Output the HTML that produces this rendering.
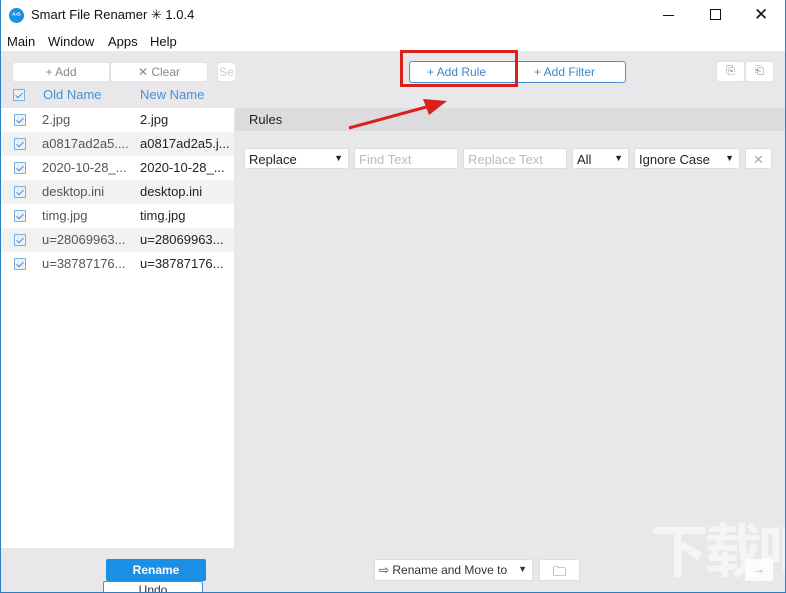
<!DOCTYPE html>
<html><head><meta charset="utf-8"><style>
*{box-sizing:border-box;margin:0;padding:0}
html,body{width:786px;height:593px;overflow:hidden}
body{font-family:"Liberation Sans",sans-serif;font-size:13px;background:#fff;position:relative;color:#333}
.abs{position:absolute}
.frame{left:0;top:0;width:786px;height:593px;border:1px solid #2d7fc1;border-top:none}
.btn{position:absolute;background:#fff;border:1px solid #e2e2e2;border-radius:3px;color:#888;text-align:center;font-size:12px}
.row{position:absolute;left:1px;width:233px;height:24px;font-size:13px}
.row span{position:absolute;top:4px;color:#555}
.cb{position:absolute;left:13px;top:6px;width:12px;height:12px;border:1px solid #7fb0dd;background:#e8f1fa}
.cb:after{content:"";position:absolute;left:3px;top:1px;width:3px;height:6px;border:solid #4a90d0;border-width:0 1.5px 1.5px 0;transform:rotate(45deg)}
.sel{position:absolute;top:148px;height:21px;background:#fff;border:1px solid #ddd;border-radius:2px;font-size:13px;padding:3px 4px;color:#222}
.sel b{position:absolute;right:5px;top:4px;font-size:9px;font-weight:normal}
.menu{position:absolute;top:34px;font-size:13px;color:#111}
</style></head><body>
<div class="abs" style="left:0;top:0;width:786px;height:32px;background:#fff"></div>
<div class="abs" style="left:9px;top:8px;width:15px;height:15px;border-radius:50%;background:#1a8fe3;color:#fff;font-size:5px;text-align:center;line-height:15px">A•B</div>
<div class="abs" style="left:31px;top:7px;font-size:13px;color:#111">Smart File Renamer ✳ 1.0.4</div>
<div class="abs" style="left:663px;top:15px;width:11px;height:1px;background:#111"></div>
<div class="abs" style="left:710px;top:9px;width:11px;height:11px;border:1px solid #111"></div>
<div class="abs" style="left:754px;top:5px;font-size:17px;color:#111">✕</div>
<div class="menu" style="left:7px">Main</div>
<div class="menu" style="left:48px">Window</div>
<div class="menu" style="left:108px">Apps</div>
<div class="menu" style="left:150px">Help</div>
<div class="abs" style="left:0;top:51px;width:786px;height:542px;background:#e8e8ea"></div>
<div class="btn" style="left:12px;top:62px;width:98px;height:20px;line-height:18px">+ Add</div>
<div class="btn" style="left:110px;top:62px;width:98px;height:20px;line-height:18px">✕ Clear</div>
<div class="btn" style="left:217px;top:62px;width:18px;height:20px;line-height:18px;border-right:none;color:#ccc">Se</div>
<div class="cb" style="top:89px"></div>
<div class="abs" style="left:43px;top:87px;color:#4a90d0;font-size:13px">Old Name</div>
<div class="abs" style="left:140px;top:87px;color:#4a90d0;font-size:13px">New Name</div>
<div class="abs" style="left:1px;top:108px;width:233px;height:440px;background:#fff"></div>
<div class="row" style="top:108px"><div class="cb"></div><span style="left:41px">2.jpg</span><span style="left:139px;color:#222">2.jpg</span></div>
<div class="row" style="top:132px;background:#f2f2f2"><div class="cb"></div><span style="left:41px">a0817ad2a5....</span><span style="left:139px;color:#222">a0817ad2a5.j...</span></div>
<div class="row" style="top:156px"><div class="cb"></div><span style="left:41px">2020-10-28_...</span><span style="left:139px;color:#222">2020-10-28_...</span></div>
<div class="row" style="top:180px;background:#f2f2f2"><div class="cb"></div><span style="left:41px">desktop.ini</span><span style="left:139px;color:#222">desktop.ini</span></div>
<div class="row" style="top:204px"><div class="cb"></div><span style="left:41px">timg.jpg</span><span style="left:139px;color:#222">timg.jpg</span></div>
<div class="row" style="top:228px;background:#f2f2f2"><div class="cb"></div><span style="left:41px">u=28069963...</span><span style="left:139px;color:#222">u=28069963...</span></div>
<div class="row" style="top:252px"><div class="cb"></div><span style="left:41px">u=38787176...</span><span style="left:139px;color:#222">u=38787176...</span></div>
<div class="abs" style="left:409px;top:61px;width:217px;height:22px;border:1px solid #4a90d0;border-radius:3px;background:#fff"></div>
<div class="abs" style="left:517px;top:61px;width:1px;height:22px;background:#4a90d0"></div>
<div class="abs" style="left:427px;top:65px;color:#3d86c9;font-size:12px">+ Add Rule</div>
<div class="abs" style="left:534px;top:65px;color:#3d86c9;font-size:12px">+ Add Filter</div>
<div class="btn" style="left:716px;top:61px;width:29px;height:21px;color:#888;line-height:19px;font-size:11px">⎘</div>
<div class="btn" style="left:745px;top:61px;width:29px;height:21px;color:#888;line-height:19px;font-size:11px">⎗</div>
<div class="abs" style="left:235px;top:108px;width:550px;height:23px;background:#dcdcde"></div>
<div class="abs" style="left:249px;top:112px;color:#222;font-size:13px">Rules</div>
<div class="abs" style="left:400px;top:50px;width:118px;height:37px;border:3px solid #d9201f"></div>
<svg class="abs" style="left:345px;top:95px" width="105" height="40"><line x1="4" y1="33" x2="85" y2="11" stroke="#d9201f" stroke-width="3"/><polygon points="102,6 78,4 84,20" fill="#d9201f"/></svg>
<div class="sel" style="left:244px;width:105px">Replace<b>▼</b></div>
<div class="sel" style="left:354px;width:104px;color:#bbb">Find Text</div>
<div class="sel" style="left:463px;width:104px;color:#bbb">Replace Text</div>
<div class="sel" style="left:572px;width:57px">All<b>▼</b></div>
<div class="sel" style="left:634px;width:106px">Ignore Case<b>▼</b></div>
<div class="sel" style="left:745px;width:27px;color:#aaa;text-align:center;padding:3px 0">✕</div>
<div class="abs" style="left:106px;top:559px;width:100px;height:22px;background:#1a8fe3;border-radius:2px;color:#fff;font-weight:bold;font-size:12px;text-align:center;line-height:22px">Rename</div>
<div class="abs" style="left:103px;top:581px;width:100px;height:12px;background:#fff;border:1px solid #4a90d0;border-bottom:none;border-radius:2px 2px 0 0;color:#333;font-size:12px;text-align:center;line-height:16px;overflow:hidden">Undo</div>
<div class="sel" style="left:374px;top:559px;width:159px;height:22px;font-size:12px;color:#333">⇨ Rename and Move to<b>▼</b></div>
<div class="sel" style="left:539px;top:559px;width:41px;height:22px;text-align:center;color:#333">🗀</div>
<div class="abs" style="left:650px;top:512px;font-size:58px;line-height:70px;color:rgba(255,255,255,0.55);font-family:'Noto Sans CJK SC',sans-serif;font-weight:bold;letter-spacing:-4px;white-space:nowrap">下载吧</div>
<div class="abs" style="left:745px;top:559px;width:28px;height:22px;background:rgba(255,255,255,0.8);border-radius:2px;color:#aaa;text-align:center;line-height:20px;font-size:12px">→</div>
<div class="abs frame"></div>
</body></html>
